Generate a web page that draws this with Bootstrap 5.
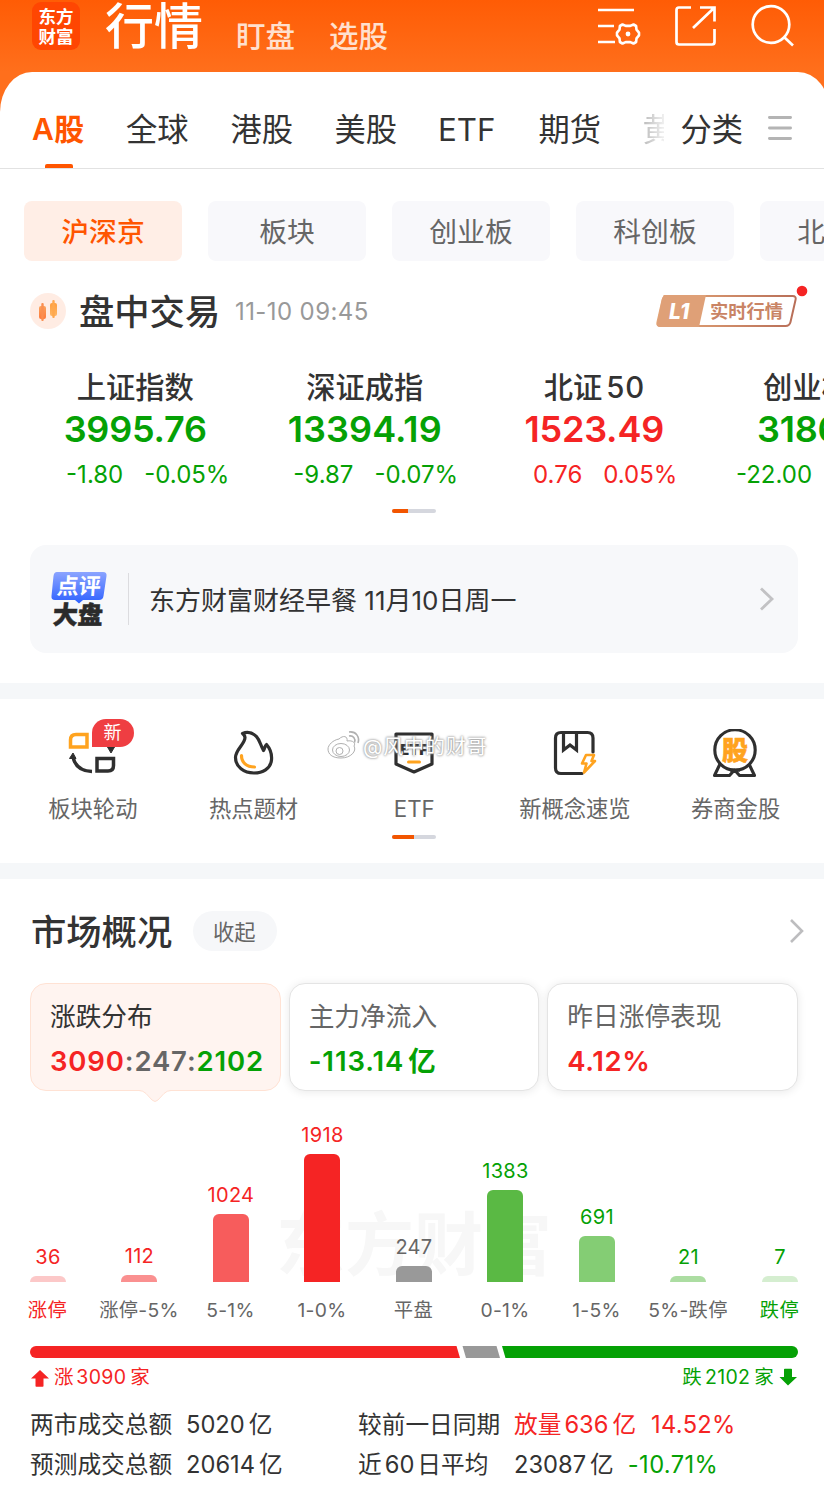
<!DOCTYPE html>
<html lang="zh-CN">
<head>
<meta charset="utf-8">
<meta name="viewport" content="width=device-width, initial-scale=1">
<title>行情</title>
<link rel="stylesheet" href="https://cdn.jsdelivr.net/npm/bootstrap@5.3.0/dist/css/bootstrap.min.css">
<style>
  :root { --up:#f52424; --down:#05a105; --ink:#333; --mute:#666; --brand:#ff5500; }
  body { font-family: Inter, "Noto Sans CJK SC", sans-serif; color: var(--ink); background:#fff; width:824px; overflow-x:hidden; line-height:1; }
  .up { color: var(--up); } .down { color: var(--down); } .mute { color: var(--mute); }
  .nw { white-space: nowrap; }
  svg { display:block; flex:none; }
  .topbar { height:122px; margin-bottom:-50px; background:linear-gradient(#ff5c05,#ff6f1c 72px); padding-left:32px; }
  .logo { width:48px; height:48px; margin-top:2px; border-radius:9px; background:#ff4602; color:#fff; font:700 17.500px/20px "Noto Sans CJK SC",sans-serif; padding-top:4px; text-align:center; }
  .t-main { font-size:49px; line-height:52px; padding-top:1px; font-weight:500; color:#fff; margin-left:25px; width:98px; }
  .t-sub { font-size:29.5px; line-height:72px; color:#ffe0ce; font-weight:500; }
  .panel { position:relative; height:97px; }
  .panel-bg { background:#fff; border-radius:32px 32px 0 0 / 40px 40px 0 0; width:830px; height:97px; }
  .panel-line { border-bottom:1px solid #e2e2e2; width:824px; }
  .tab { font-size:31.3px; line-height:116px; height:96px; flex:none; }
  .tab-on { color:var(--brand); font-weight:600; font-size:30px; line-height:114px; position:relative; letter-spacing:.5px; }
  .tab-on::after { content:""; position:absolute; left:13px; top:92px; width:28px; height:4px; border-radius:2px 2px 0 0; background:var(--brand); }
  .fade-tab { width:21px; overflow:hidden; background:linear-gradient(90deg,#bbb,#f0f0f0); -webkit-background-clip:text; background-clip:text; color:transparent; }
  .chip { flex:none; width:158px; height:60px; border-radius:8px; background:#f8f8fb; color:var(--mute); font-size:27.8px; line-height:62px; text-align:center; }
  .chip-on { background:#ffeee6; color:var(--brand); font-weight:500; }
  .h-title { font-size:35.3px; line-height:40px; padding-top:3px; font-weight:500; }
  .idx { flex:none; width:229.5px; text-align:center; }
  .idx-n { font-size:29.3px; line-height:38px; height:36px; font-weight:500; }
  .idx-v { font-size:36px; line-height:49px; height:48px; font-weight:600; letter-spacing:-.2px; }
  .idx-c { font-size:24px; line-height:43px; height:42px; gap:21px; padding-left:25px; }
  .pager { width:44px; height:4px; border-radius:2px; background:#d5d7de; overflow:hidden; margin:0 auto; }
  .pager i { display:block; height:4px; background:#f25500; }
  .news { margin:32px 26px 0 30px; height:108px; border-radius:16px; background:#f7f8fa; padding:0 23px 0 20px; }
  .sep { height:16px; background:#f5f7f9; }
  .entry { width:160.7px; height:164px; text-align:center; padding-top:30px; position:relative; }
  .entry svg { margin:0 auto; position:relative; left:-1px; }
  .entry-t { font-size:22.3px; line-height:30px; margin-top:16px; padding-top:1px; color:var(--mute); }
  .new-tag { position:absolute; left:79px; top:20px; width:42px; height:28px; border-radius:14px 14px 14px 0; background:#ef3e42; color:#fff; font-size:18px; line-height:28px; }
  .wb { position:absolute; left:327px; top:30px; color:#fff; font-size:20px; line-height:36px; text-shadow:0 0 2px #888,0 0 3px #aaa; }
  .pill { width:84px; height:40px; border-radius:20px; background:#f6f7f9; color:var(--mute); font-size:21.3px; line-height:42px; text-align:center; margin-left:21px; padding-right:2px; }
  .tile { flex:1 1 0; height:108px; border-radius:16px; border:1px solid #e4e4e4; background:#fff; box-shadow:0 1px 10px rgba(0,0,0,.09); padding:16px 0 0 19px; position:relative; }
  .tile-on { background:#fff4f0; border-color:#ffe2d4; box-shadow:none; }
  .tile-on svg { position:absolute; left:108px; top:105px; }
  .tile-n { font-size:25.7px; line-height:34px; }
  .tile-v { font-size:27.5px; line-height:34px; margin-top:10px; font-weight:600; letter-spacing:.4px; }
  .chart { position:relative; height:191px; padding:0 0 0 2.2px; }
  .wm { position:absolute; left:276px; top:114px; font-size:69px; line-height:80px; font-weight:700; color:#f7f7f7; }
  .bc { position:relative; flex:none; width:91.5px; height:191px; font-size:20px; letter-spacing:.3px; }
  .bc i { display:block; width:36px; border-radius:6px 6px 0 0; margin-top:9px; }
  .bl { flex:none; width:91.5px; text-align:center; font-size:19.3px; line-height:57px; height:56px; letter-spacing:.3px; }
  .split-bar { height:12px; margin:8px 26px 0 30px; border-radius:6px; overflow:hidden; }
  .r-foot { height:36px; line-height:36px; font-size:19.5px; padding:1px 26px 0 30px; letter-spacing:.3px; }
  .stat { display:grid; grid-template-columns:156px 172px 156px auto; padding-left:30px; font-size:23.7px; line-height:41px; height:40px; justify-content:start; }
</style>
</head>
<body>
<header class="topbar d-flex align-items-start">
  <div class="logo">东方<br>财富</div>
  <div class="t-main nw">行情</div>
  <div class="t-sub nw" style="margin-left:33px">盯盘</div>
  <div class="t-sub nw" style="margin-left:34px">选股</div>
  <svg width="226" height="56" style="margin-left:210px" viewBox="598 0 226 56" fill="none" stroke="#fff" stroke-width="2.7">
    <path d="M598 10h36M598 26h16M598 42h17"/>
    <path stroke-width="2.600" stroke-linejoin="round" d="M622.500 24.500l3.200 1.400h4.600l3.200-1.400 2.600 1.500.4 3.700 2.500 3v2.600l-2.500 3-.4 3.700-2.600 1.500-3.200-1.400h-4.600l-3.200 1.400-2.600-1.500-.4-3.700-2.500-3v-2.600l2.500-3 .4-3.700z"/>
    <circle cx="628" cy="34" r="2.400" fill="#fff" stroke="none"/>
    <path d="M691 7.500h-12q-2.500 0-2.500 2.500v32q0 2.500 2.500 2.500h33q2.500 0 2.500-2.500v-13M700 7.500h14.500v14M714 8l-21 20"/>
    <circle cx="771" cy="24.500" r="18.300"/><path d="M784 37l9 8.500"/>
  </svg>
</header>
<nav class="panel overflow-hidden">
  <div class="panel-bg">
  <div class="panel-line d-flex">
    <div class="tab tab-on nw" style="margin-left:32px;width:94px">A股</div>
    <div class="tab nw" style="width:104.500px">全球</div>
    <div class="tab nw" style="width:104px">港股</div>
    <div class="tab nw" style="width:103.500px">美股</div>
    <div class="tab nw" style="width:100.500px">ETF</div>
    <div class="tab nw" style="width:104px">期货</div>
    <div class="tab nw fade-tab" style="margin-right:17px">黄</div>
    <div class="tab nw" style="width:87px">分类</div>
    <svg width="24" height="96" viewBox="0 0 24 96" stroke="#b4b4b4" stroke-width="2.800" stroke-linecap="round"><path d="M1.400 45.500h21.200M1.400 56h21.200M1.400 66.500h21.200"/></svg>
  </div>
  </div>
</nav>
<div class="d-flex overflow-hidden" style="padding-left:24px;gap:26px;margin-top:32px">
  <div class="chip chip-on">沪深京</div><div class="chip">板块</div><div class="chip">创业板</div><div class="chip">科创板</div><div class="chip">北证板</div>
</div>
<div class="d-flex align-items-center" style="height:40px;margin-top:30px;padding-left:30px">
  <svg width="36" height="36" viewBox="0 0 36 36"><defs><linearGradient id="c1" x2="0" y2="1"><stop stop-color="#f9a35c"/><stop offset="1" stop-color="#ff7a3c"/></linearGradient><linearGradient id="c2" x2="0" y2="1"><stop stop-color="#ff9d3c"/><stop offset="1" stop-color="#ffb663"/></linearGradient></defs><circle cx="18" cy="18" r="18" fill="#ffece3"/><rect x="9" y="13" width="7" height="13" rx="2" fill="url(#c1)"/><rect x="11.300" y="10" width="2.400" height="18" rx="1" fill="#fb8f50"/><rect x="20" y="10" width="7" height="13" rx="2" fill="url(#c2)"/><rect x="22.300" y="7" width="2.400" height="18" rx="1" fill="#ffa84e"/></svg>
  <div class="h-title nw" style="margin-left:13px;width:156px">盘中交易</div>
  <div class="nw" style="font-size:24px;line-height:42px;color:#999;letter-spacing:.4px;width:421px;padding-top:2px">11-10 09:45</div>
  <svg width="156" height="46" viewBox="0 0 156 46" style="overflow:visible"><defs><linearGradient id="g1"><stop stop-color="#e6a878"/><stop offset="1" stop-color="#b86e58"/></linearGradient></defs>
    <path d="M8 8.500h129q4 0 3 4l-5 22q-1 4-5 4H5q-4 0-3-4l5-22q1-4 5-4z" transform="translate(-.5 -.5)" fill="none" stroke="url(#g1)" stroke-width="2"/>
    <path d="M10 7h40l-7 32H4q-4 0-3-4l5-24q1-4 4-4z" fill="#dfa077"/>
    <text x="13" y="31" font-size="21" font-weight="800" font-style="italic" fill="#fff">L1</text>
    <text x="54" y="29.500" font-size="18.300" font-weight="600" fill="#c98465">实时行情</text>
    <circle cx="146" cy="3" r="5.300" fill="#f52424"/></svg>
</div>
<section class="d-flex overflow-hidden" style="margin-top:38px;padding-left:20.500px">
  <div class="idx"><div class="idx-n">上证指数</div><div class="idx-v down">3995.76</div><div class="idx-c down d-flex justify-content-center"><span>-1.80</span><span>-0.05%</span></div></div>
  <div class="idx"><div class="idx-n">深证成指</div><div class="idx-v down" style="letter-spacing:.1px">13394.19</div><div class="idx-c down d-flex justify-content-center" style="padding-left:22px"><span>-9.87</span><span>-0.07%</span></div></div>
  <div class="idx"><div class="idx-n">北证<span style="margin-left:4px;letter-spacing:.8px">50</span></div><div class="idx-v up">1523.49</div><div class="idx-c up d-flex justify-content-center" style="padding-left:22px"><span>0.76</span><span>0.05%</span></div></div>
  <div class="idx text-start nw"><div class="idx-n" style="padding-left:54px">创业板指</div><div class="idx-v down" style="padding-left:48px">3186.32</div><div class="idx-c down d-flex" style="padding-left:27px"><span>-22.00</span><span>-0.69%</span></div></div>
</section>
<div class="pager" style="margin-top:14px;margin-left:392px"><i style="width:16px"></i></div>
<section class="news d-flex align-items-center">
  <svg width="58" height="56" viewBox="0 0 58 56"><defs><linearGradient id="b1" x2="0" y2="1"><stop stop-color="#8ba4ff"/><stop offset="1" stop-color="#2f62ff"/></linearGradient></defs><path d="M7 1h46q4 0 3.500 4l-3 20q-.5 4-4.500 4H33l-4 3.500L25 29H5q-4 0-3.500-4l2-20Q4 1 7 1z" fill="url(#b1)"/>
  <text x="7" y="23.500" font-size="22" font-weight="700" fill="#fff" transform="skewX(-4) translate(1 0)">点评</text><text x="5" y="53" font-size="25" font-weight="900" fill="#2b2b2b" stroke="#2b2b2b" stroke-width=".5" transform="skewX(-4) translate(1 0)">大盘</text></svg>
  <div style="width:1px;height:52px;background:#dcdcdf;margin:0 20px 0 20px"></div>
  <div class="nw flex-grow-1" style="font-size:26px;line-height:40px;padding-top:3px">东方财富财经早餐 11月10日周一</div>
  <svg width="16" height="26" viewBox="0 0 16 26" fill="none" stroke="#c2c2c4" stroke-width="2.800"><path d="M2 2.500L13 13 2 23.500"/></svg>
</section>
<div class="sep" style="margin-top:30px"></div>
<section class="position-relative" style="height:164px;padding-left:12.500px">
  <div class="d-flex">
  <div class="entry"><svg width="52" height="48" viewBox="67 729 52 48" fill="none" stroke="#2f2f2f" stroke-width="3.500" stroke-linejoin="round"><path d="M71.500 747v-7q0-5.500 5.500-5.500h11V747z" stroke="#ffa31f" stroke-linejoin="miter"/><path d="M98 758.500h16.500v7q0 5.500-5.500 5.500H98z" stroke-linejoin="miter"/><path d="M74 757q3 14 19 14.500"/><path d="M74 753l3 5.500h-6.500z" fill="#2f2f2f" stroke-width="1"/><path d="M112 753l3.500-6h-7z" fill="#2f2f2f" stroke-width="1"/></svg><span class="new-tag">新</span><div class="entry-t">板块轮动</div></div>
  <div class="entry"><svg width="44" height="48" viewBox="231 729 44 48" fill="none" stroke="#2f2f2f" stroke-width="3.200" stroke-linejoin="round" stroke-linecap="round"><path d="M242.500 733.500c4.500-1.800 10-.8 14 3.200 3.500 3.700 4 8.800 7 13.800 1.500-1.500.8-4.500 3-6 4 4.500 5.500 10 5 15.500-1 9-9 13-17.500 13-10 0-18.500-6-18.500-15.500 0-8 9.500-13.500 9.500-20-.2-2-1.200-3-2.500-4z"/><path d="M241.500 755.500c0 7 5 11.500 13 11.500" stroke="#ffa31f"/></svg><div class="entry-t">热点题材</div></div>
  <div class="entry"><svg width="44" height="48" viewBox="391 729 44 48"><path d="M396 734h36v30l-18 8-18-8z" fill="none" stroke="#2f2f2f" stroke-width="3.200" stroke-linejoin="round"/><text x="414" y="755" text-anchor="middle" font-size="15" font-weight="900" fill="#2f2f2f">ETF</text><path d="M408.500 762h11" stroke="#ffa31f" stroke-width="3" stroke-linecap="round"/></svg><div class="entry-t">ETF</div></div>
  <div class="entry"><svg width="48" height="48" viewBox="551 729 48 48" fill="none" stroke="#2f2f2f" stroke-width="3.200" stroke-linecap="round"><path d="M583 773.500h-21q-5.500 0-5.500-5.500v-30q0-5.500 5.500-5.500h26.500q5.500 0 5.500 5.500v14"/><path d="M564.500 733v17l6.500-5 6.500 5v-17"/><path d="M587 755h8l-2.500 6h3.500l-11 11.500 2.500-9h-4.500z" stroke="#ffa31f" stroke-width="2.600" stroke-linejoin="round"/></svg><div class="entry-t">新概念速览</div></div>
  <div class="entry"><svg width="48" height="50" style="margin-bottom:-2px" viewBox="711 729 48 50"><g fill="none" stroke="#2f2f2f" stroke-width="3.100" stroke-linejoin="round"><circle cx="735" cy="750" r="20.200"/><path d="M720 764l-5.500 11.500h15l5-5.500 5 5.500h15L749 764M730 770h10"/></g><text x="735" y="760" text-anchor="middle" font-size="26" font-weight="900" fill="#ffa31f" stroke="#ffa31f" stroke-width=".6">股</text></svg><div class="entry-t">券商金股</div></div>
  </div>
  <div class="wb d-flex nw"><svg width="34" height="34" viewBox="0 0 34 34" fill="none" stroke="#b0b0b0" stroke-width="1"><path d="M12 10c4-4 9-3 8 2 6-1 9 2 7 5 3 5-3 12-13 12C5 29 1 25 1 20c0-4 5-9 11-10z" fill="#fff"/><ellipse cx="14" cy="21" rx="8.500" ry="6.500"/><circle cx="12.500" cy="22" r="3.500"/><path d="M22 3c7-1 11 5 9 11M22 7c4-1 7 3 5.500 6.500" stroke-width="1.600"/></svg><span style="margin-left:2px;letter-spacing:.9px;font-size:20px">@风中的财哥</span></div>
  <div class="pager position-absolute" style="left:392px;top:136px"><i style="width:22px"></i></div>
</section>
<div class="sep"></div>
<div class="d-flex align-items-center" style="height:40px;margin:32px 19px 0 31px">
  <div class="h-title nw">市场概况</div><div class="pill">收起</div>
  <svg class="ms-auto" width="16" height="26" viewBox="0 0 16 26" fill="none" stroke="#bdbdbf" stroke-width="2.600"><path d="M2 2L13 13 2 24"/></svg>
</div>
<section class="d-flex" style="margin:32px 26px 0 30px;gap:8px">
  <div class="tile tile-on"><div class="tile-n">涨跌分布</div><div class="tile-v nw" style="letter-spacing:.85px"><span class="up">3090</span><span class="mute">:247:</span><span class="down">2102</span></div><svg width="32" height="15" viewBox="0 0 32 15"><path d="M0 1.500q4 0 7 3l6 6.500q3 3 6 0l6-6.500q3-3 7-3V0H0z" fill="#fff4f0"/><path d="M0 1.500q4 0 7 3l6 6.500q3 3 6 0l6-6.500q3-3 7-3" fill="none" stroke="#ffe2d4"/></svg></div>
  <div class="tile"><div class="tile-n mute">主力净流入</div><div class="tile-v down nw" style="letter-spacing:.9px">-113.14<span style="margin-left:4px">亿</span></div></div>
  <div class="tile"><div class="tile-n mute">昨日涨停表现</div><div class="tile-v up" style="letter-spacing:.6px">4.12%</div></div>
</section>
<section class="chart d-flex">
  <div class="wm nw">东方财富</div>
  <div class="bc up d-flex flex-column justify-content-end align-items-center">36<i style="height:6px;background:#fcc8c8"></i></div>
  <div class="bc up d-flex flex-column justify-content-end align-items-center">112<i style="height:7.500px;background:#fa9090"></i></div>
  <div class="bc up d-flex flex-column justify-content-end align-items-center">1024<i style="height:68px;background:#f75c5c"></i></div>
  <div class="bc up d-flex flex-column justify-content-end align-items-center">1918<i style="height:128px;background:#f52424"></i></div>
  <div class="bc mute d-flex flex-column justify-content-end align-items-center">247<i style="height:16.500px;background:#999"></i></div>
  <div class="bc down d-flex flex-column justify-content-end align-items-center">1383<i style="height:92.500px;background:#5ab944"></i></div>
  <div class="bc down d-flex flex-column justify-content-end align-items-center">691<i style="height:46px;background:#84cd74"></i></div>
  <div class="bc down d-flex flex-column justify-content-end align-items-center">21<i style="height:6px;background:#acdda2"></i></div>
  <div class="bc down d-flex flex-column justify-content-end align-items-center">7<i style="height:6px;background:#d5eed0"></i></div>
</section>
<div class="d-flex nw mute" style="padding-left:1.700px">
  <div class="bl up">涨停</div><div class="bl">涨停-5%</div><div class="bl">5-1%</div><div class="bl">1-0%</div><div class="bl">平盘</div><div class="bl">0-1%</div><div class="bl">1-5%</div><div class="bl">5%-跌停</div><div class="bl down">跌停</div>
</div>
<div class="split-bar"><svg width="768" height="12"><path d="M0 0h426.500l3.500 12H0z" fill="#f52424"/><path d="M432.500 0h34l3.500 12h-34z" fill="#999"/><path d="M472 0h296v12H475.500z" fill="#05a105"/></svg></div>
<div class="r-foot d-flex align-items-center justify-content-between nw">
  <div class="up d-flex align-items-center"><svg width="19" height="18" viewBox="0 0 19 18" style="margin-right:5px;margin-top:2px"><path d="M10 1L1 9.500h4.500V17q0 .8.800.8h6.400q.8 0 .8-.8V9.500H19z" fill="#f52424"/></svg>涨<span style="margin:0 4px 0 2.500px">3090</span>家</div>
  <div class="down d-flex align-items-center">跌<span style="margin:0 4px 0 3px">2102</span>家<svg width="19" height="18" viewBox="0 0 19 18" style="margin-left:5px"><path d="M9 17.500L.5 9H5V1.500q0-.8.800-.8h6.400q.8 0 .8.800V9h5z" fill="#05a105"/></svg></div>
</div>
<div class="nw" style="margin-top:10px">
  <div class="stat"><span>两市成交总额</span><span>5020<span style="margin-left:4px">亿</span></span><span>较前一日同期</span><span class="up">放量<span style="margin:0 4px 0 3px">636</span>亿<span style="margin-left:15px;letter-spacing:.3px">14.52%</span></span></div>
  <div class="stat"><span>预测成交总额</span><span>20614<span style="margin-left:4px">亿</span></span><span>近<span style="margin:0 3px">60</span>日平均</span><span>23087<span style="margin-left:4px">亿</span><span class="down" style="margin-left:14px;letter-spacing:.4px">-10.71%</span></span></div>
</div>
<script src="https://cdn.jsdelivr.net/npm/bootstrap@5.3.0/dist/js/bootstrap.bundle.min.js"></script>
</body>
</html>
